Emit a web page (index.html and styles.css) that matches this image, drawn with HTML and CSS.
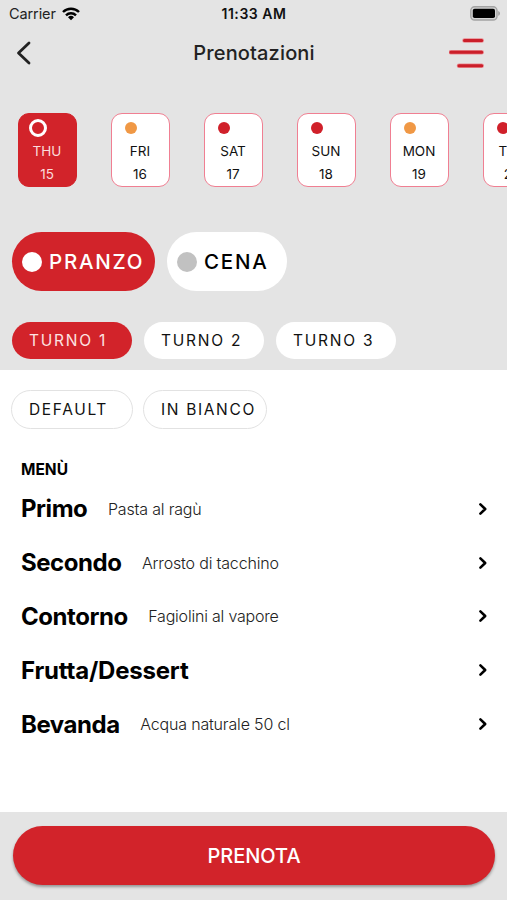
FILE: index.html
```html
<!DOCTYPE html>
<html lang="it">
<head>
<meta charset="utf-8">
<meta name="viewport" content="width=device-width, initial-scale=1">
<title>Prenotazioni</title>
<link rel="stylesheet" href="styles.css">
</head>
<body>
<div class="app">
  <header class="top">
    <div class="status">
      <div class="carrier"><span>Carrier</span>
        <svg class="wifi" width="18" height="14" viewBox="0 0 18 14" fill="none" stroke="#000" stroke-width="2.4"><path d="M1 5a11.3 11.3 0 0 1 16 0"/><path d="M4 8.3a7 7 0 0 1 10 0"/><path d="M9 13.3L6 10.3a4.3 4.3 0 0 1 6 0z" fill="#000" stroke="none"/></svg>
      </div>
      <span class="clock">11:33 AM</span>
      <svg class="battery" width="31" height="15" viewBox="0 0 31 15"><rect x=".8" y=".8" width="26.2" height="13.2" rx="3.8" fill="#d5d5d5" stroke="#a3a3a3" stroke-width="1.4"/><rect x="2.8" y="2.7" width="22.2" height="9.4" rx="1.8"/><path d="M28.2 5v4.8c2.4-.8 2.4-4 0-4.8z" fill="#a3a3a3"/></svg>
    </div>
    <div class="navbar">
      <svg class="back" width="16" height="24" viewBox="0 0 16 24" fill="none" stroke="#222" stroke-width="2.8" stroke-linecap="round" stroke-linejoin="round"><path d="M14 2L3.5 12 14 22"/></svg>
      <h1>Prenotazioni</h1>
      <svg class="burger" width="36" height="32" viewBox="0 0 36 32" fill="none" stroke-linecap="round"><g stroke="#e98b91" stroke-width="4.6"><path d="M15.5 3.5h17.2M1.8 15.2h30.9M10 28.8h22.7"/></g><g stroke="#cb1f2a" stroke-width="3"><path d="M15.5 3.5h17.2M1.8 15.2h30.9M10 28.8h22.7"/></g></svg>
    </div>
    <div class="days">
      <div class="day active"><i class="dot ring"></i><span>THU</span><span>15</span></div>
      <div class="day"><i class="dot orange"></i><span>FRI</span><span>16</span></div>
      <div class="day"><i class="dot"></i><span>SAT</span><span>17</span></div>
      <div class="day"><i class="dot"></i><span>SUN</span><span>18</span></div>
      <div class="day"><i class="dot orange"></i><span>MON</span><span>19</span></div>
      <div class="day"><i class="dot"></i><span>TUE</span><span>20</span></div>
    </div>
    <div class="meals">
      <div class="meal lunch active"><i></i><span>PRANZO</span></div>
      <div class="meal dinner"><i></i><span>CENA</span></div>
    </div>
    <div class="shifts">
      <div class="shift active">TURNO 1</div>
      <div class="shift">TURNO 2</div>
      <div class="shift">TURNO 3</div>
    </div>
  </header>
  <main class="content">
    <div class="diets">
      <div class="diet">DEFAULT</div>
      <div class="diet wide">IN BIANCO</div>
    </div>
    <h2>MENÙ</h2>
    <div class="menu">
      <div class="course"><b>Primo</b><span>Pasta al ragù</span><svg class="chev" width="10" height="14" viewBox="0 0 10 14"><path d="M2.4 2.4L7.2 7l-4.8 4.6"/></svg></div>
      <div class="course"><b>Secondo</b><span>Arrosto di tacchino</span><svg class="chev" width="10" height="14" viewBox="0 0 10 14"><path d="M2.4 2.4L7.2 7l-4.8 4.6"/></svg></div>
      <div class="course"><b>Contorno</b><span class="tight">Fagiolini al vapore</span><svg class="chev" width="10" height="14" viewBox="0 0 10 14"><path d="M2.4 2.4L7.2 7l-4.8 4.6"/></svg></div>
      <div class="course"><b class="loose">Frutta/Dessert</b><svg class="chev" width="10" height="14" viewBox="0 0 10 14"><path d="M2.4 2.4L7.2 7l-4.8 4.6"/></svg></div>
      <div class="course"><b>Bevanda</b><span>Acqua naturale 50 cl</span><svg class="chev" width="10" height="14" viewBox="0 0 10 14"><path d="M2.4 2.4L7.2 7l-4.8 4.6"/></svg></div>
    </div>
  </main>
  <footer class="bottom"><div class="book">PRENOTA</div></footer>
</div>
</body>
</html>
```
FILE: styles.css
```css
* { box-sizing: border-box; }
body { margin: 0; background: #fff; font-family: Inter, "Liberation Sans", sans-serif; color: #111; }
.app { width: 507px; height: 900px; overflow: hidden; display: flex; flex-direction: column; }
.top { height: 370px; background: #e4e4e4; flex: none; overflow: hidden; }
svg { display: block; flex: none; }

.status { height: 27px; display: grid; grid-template-columns: 1fr auto 1fr; align-items: center; padding: 0 6px 0 9px; }
.carrier { display: flex; align-items: center; gap: 6px; margin-right: 3px; font-size: 14.5px; color: #222; letter-spacing: -0.1px; }
.clock { font-weight: 600; font-size: 14px; letter-spacing: 0.55px; margin-right: 2px; }
.battery { justify-self: end; }
.navbar { height: 51px; display: grid; grid-template-columns: 1fr auto 1fr; align-items: center; padding: 0 22px 0 15px; }
h1 { margin: 0 -4px 0 4px; font-size: 20px; font-weight: 500; color: #222; letter-spacing: 0.15px; }
.burger { justify-self: end; }

.days { display: flex; gap: 34px; padding: 35px 0 0 18px; }
.day { flex: none; width: 59px; height: 74px; border: 1px solid #f07f92; border-radius: 11px; background: #fff; display: flex; flex-direction: column; align-items: center; font-size: 13.5px; line-height: 22.5px; }
.day span { margin-left: -1px; }
.day .dot { width: 12px; height: 12px; border-radius: 50%; background: #d0202a; align-self: flex-start; margin: 8px 0 6px 12.5px; flex: none; }
.day .dot.orange { background: #f09845; }
.day .dot.ring { width: 18px; height: 18px; background: none; border: 3px solid #fff; margin: 5px 0 3px 10px; }
.day.active { background: #d2232a; border-color: #d2232a; color: #fbdcdc; }

.meals { display: flex; gap: 12px; padding: 45px 0 0 12px; }
.meal { height: 59px; border-radius: 30px; background: #fff; display: flex; align-items: center; gap: 7.5px; padding-left: 9.5px; font-size: 20.5px; font-weight: 500; letter-spacing: 1.75px; color: #000; }
.meal i { width: 20px; height: 20px; border-radius: 50%; background: #c1c1c1; flex: none; }
.meal.active { background: #d2232a; color: #fff; }
.meal.active i { background: #fff; }
.lunch { width: 143px; }
.dinner { width: 120px; }

.shifts { display: flex; gap: 12px; padding: 31px 0 0 12px; }
.shift { width: 120px; height: 37px; line-height: 38px; border-radius: 19px; background: #fff; padding-left: 17px; font-size: 15.5px; letter-spacing: 1.75px; }
.shift.active { background: #d2232a; color: #fde3e3; }

.content { flex: 1; }
.diets { display: flex; gap: 10px; padding: 20px 0 0 11px; }
.diet { width: 122px; height: 39px; line-height: 37px; border: 1px solid #e2e2e2; border-radius: 20px; padding-left: 17px; font-size: 15.5px; letter-spacing: 1.65px; white-space: nowrap; }
.diet.wide { width: 124px; }
h2 { margin: 31px 0 0 21px; font-size: 15.5px; line-height: 20px; font-weight: 700; color: #000; }
.menu { padding: 2px 19px 0 21px; }
.course { height: 53.8px; display: flex; align-items: center; }
.course b { font-size: 24px; font-weight: 650; color: #000; letter-spacing: -0.45px; }
.course .loose { letter-spacing: -0.2px; }
.course span { margin-left: 20.5px; font-size: 16px; font-weight: 300; color: #222; letter-spacing: -0.17px; }
.course .tight { letter-spacing: -0.2px; }
.chev { margin-left: auto; fill: none; stroke: #000; stroke-width: 2.6; stroke-linecap: round; stroke-linejoin: round; }

.bottom { height: 88px; background: #e4e4e4; padding: 14px 12px 0 13px; flex: none; }
.book { height: 59px; line-height: 61px; border-radius: 30px; background: #d2232a; color: #fff; text-align: center; font-size: 20px; font-weight: 500; box-shadow: 0 2px 3px rgba(0,0,0,.35); }
```
